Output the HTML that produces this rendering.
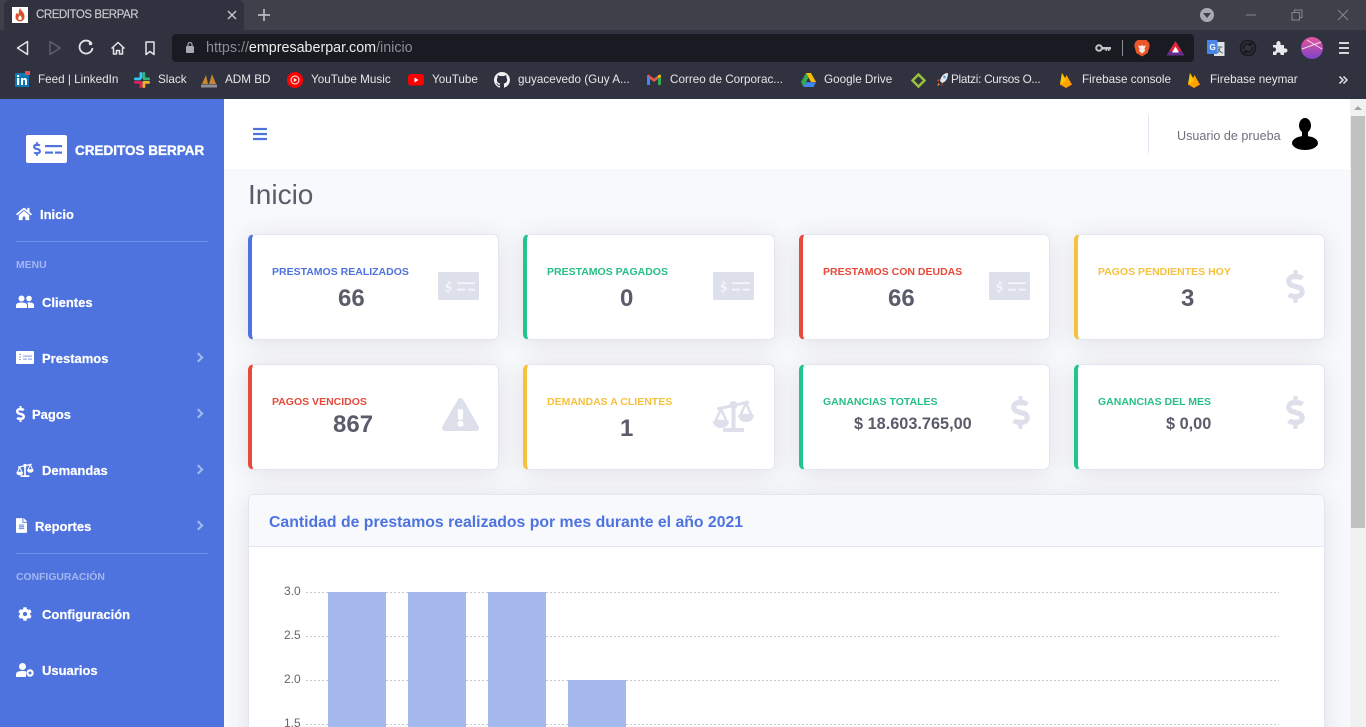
<!DOCTYPE html>
<html lang="es"><head><meta charset="utf-8"><title>CREDITOS BERPAR</title>
<style>
*{box-sizing:border-box}
html,body{margin:0;padding:0;width:1366px;height:727px;overflow:hidden;background:#f8f9fc;font-family:"Liberation Sans",sans-serif}
#root{position:relative;width:1366px;height:727px;overflow:hidden;background:#f8f9fc}
.a,.t,svg.i{position:absolute}
.t{white-space:nowrap;line-height:20px;height:20px}
.bm{color:#e6e6e8;font-size:11.7px}
.nav{color:#fff;font-weight:700;font-size:13px;-webkit-text-stroke:.2px #fff}
.head{color:#a4b6ef;font-weight:700;font-size:10.4px}
.chev{position:absolute;width:7px;height:7px;border-top:2.5px solid #a6b9ef;border-right:2.5px solid #a6b9ef;transform:rotate(45deg);left:195px}
.card{position:absolute;width:251px;height:106px;background:#fff;border-radius:6px;border:1px solid #e3e6f0;border-left:4px solid var(--c);box-shadow:0 3px 24px rgba(58,59,69,.13)}
.ct{font-weight:700;font-size:10.5px}
.cv{color:#5a5c69;font-weight:700;font-size:24px}
.cm{color:#5a5c69;font-weight:700;font-size:16.3px}
.yl{font-size:12px;color:#666;left:284px}
</style></head><body>
<div id="root">
<svg width="0" height="0" style="position:absolute">
<defs>
<symbol id="dol" viewBox="0 0 288 512"><path fill="currentColor" d="M209.2 233.4l-108-31.6C88.7 198.2 80 186.5 80 173.5c0-16.3 13.2-29.5 29.5-29.5h66.3c12.2 0 24.2 3.7 34.2 10.5 6.1 4.1 14.3 3.1 19.5-2l34.8-34c7.1-6.9 6.1-18.4-1.8-24.5C238 74.8 207.4 64.1 176 64V16c0-8.8-7.2-16-16-16h-32c-8.8 0-16 7.2-16 16v48h-2.5C45.8 64-5.4 118.7.5 183.6c4.2 46.1 39.4 83.6 83.8 96.6l102.5 30c12.5 3.7 21.2 15.3 21.2 28.3 0 16.3-13.2 29.5-29.5 29.5h-66.3C100 368 88 364.3 78 357.5c-6.1-4.1-14.3-3.1-19.5 2l-34.8 34c-7.1 6.9-6.1 18.4 1.8 24.5 24.5 19.2 55.1 29.9 86.5 30v48c0 8.8 7.2 16 16 16h32c8.8 0 16-7.2 16-16v-48.2c46.6-.9 90.3-28.6 105.7-72.7 21.5-61.6-14.6-124.8-72.5-141.7z"/></symbol>
<symbol id="chk" viewBox="0 0 41 28"><rect width="41" height="28" rx="1.5" fill="currentColor"/><g fill="#f3f4f8"><path d="M10.200 21.500v-1.500c-1.100-.1-2-.5-2.700-1.100l1-1.300c.6.5 1.300.9 2 .9.800 0 1.200-.3 1.200-.9 0-.5-.4-.9-1.600-1.300-1.500-.5-2.400-1.200-2.400-2.500 0-1.200.9-2.100 2.400-2.300V9h1.300v1.400c.9.1 1.500.5 2.100 1l-1 1.200c-.5-.4-1-.7-1.600-.7-.7 0-1.100.3-1.100.8s.4.800 1.600 1.200c1.600.6 2.400 1.300 2.400 2.600 0 1.200-.9 2.200-2.500 2.400v1.500z"/><rect x="19" y="10.200" width="18" height="1.900"/><rect x="19" y="16.700" width="8" height="1.900"/><rect x="30" y="16.700" width="7" height="1.900"/></g></symbol>
<symbol id="scl" viewBox="0 0 41 33"><g fill="currentColor"><path d="M8 10L2.500 22h11zM33 4l-5.500 12h11z" fill="none" stroke="currentColor" stroke-width="2.500"/><path d="M0 22h16c0 4-3.500 7-8 7S0 26 0 22zM25 16h16c0 4-3.500 7-8 7s-8-3-8-7z"/><path d="M4 10L36 3" stroke="currentColor" stroke-width="3"/><rect x="18.500" y="4" width="4" height="27"/><circle cx="20.500" cy="6" r="4"/><rect x="10" y="29" width="21" height="4" rx="1"/></g></symbol>
<symbol id="tri" viewBox="0 0 576 512"><path fill="currentColor" d="M569.517 440.013C587.975 472.007 564.806 512 527.94 512H48.054c-36.937 0-59.999-40.055-41.577-71.987L246.423 24.028c18.467-32.009 64.72-31.951 83.154 0l239.94 415.985zM288 354c-25.405 0-46 20.595-46 46s20.595 46 46 46 46-20.595 46-46-20.595-46-46-46zm-43.673-165.346l7.418 136c.347 6.364 5.609 11.346 11.982 11.346h48.546c6.373 0 11.635-4.982 11.982-11.346l7.418-136c.375-6.874-5.098-12.654-11.982-12.654h-63.383c-6.884 0-12.356 5.78-11.981 12.654z"/></symbol>
</defs></svg>

<!-- browser chrome -->
<div class="a" style="left:0;top:0;width:1366px;height:30px;background:#40404a"></div>
<div class="a" style="left:4px;top:0;width:240px;height:31px;background:#30333f;border-radius:6px 6px 0 0"></div>
<div class="a" style="left:0;top:30px;width:1366px;height:69px;background:#30333f"></div>
<svg class="i" style="left:12px;top:7px" width="16" height="16" viewBox="0 0 16 16"><rect width="16" height="16" fill="#fff"/><path fill="#d9502a" d="M8 1c1 3 4.500 4 4.500 8.500A4.500 4.500 0 0 1 8 14.500 4.500 4.500 0 0 1 3.500 9.500c0-2 1-3 1.700-4 .2 1.200.7 1.800 1.300 2.200C6.600 5.500 7 3 8 1z"/><path fill="#fff" d="M8 8c.7 1.200 1.800 1.800 1.800 3.300A1.800 1.800 0 0 1 8 13a1.800 1.800 0 0 1-1.800-1.700C6.200 10 7.500 9.500 8 8z"/></svg>
<div class="t" style="left:36px;top:5px;color:#c9cbd0;font-size:11.500px;letter-spacing:-.45px;-webkit-text-stroke:.15px #c9cbd0">CREDITOS BERPAR</div>
<svg class="i" style="left:226px;top:9px" width="12" height="12" viewBox="0 0 12 12"><path d="M2 2l8 8M10 2l-8 8" stroke="#c3c4c9" stroke-width="1.500"/></svg>
<svg class="i" style="left:257px;top:8px" width="14" height="14" viewBox="0 0 14 14"><path d="M7 1v12M1 7h12" stroke="#b8b9be" stroke-width="1.700"/></svg>
<svg class="i" style="left:1199px;top:7px" width="16" height="16" viewBox="0 0 16 16"><circle cx="8" cy="8" r="7" fill="#a9aab0"/><path d="M4 6h8l-4 5z" fill="#40404a"/></svg>
<svg class="i" style="left:1240px;top:5px" width="116" height="20" viewBox="0 0 116 20"><path d="M6 10h10" stroke="#85868c"/><path d="M52 7.500h7.500V15H52zM54.500 7.500V5H62v7.500h-2.500" fill="none" stroke="#85868c"/><path d="M98 5l10 10M108 5l-10 10" stroke="#85868c"/></svg>

<svg class="i" style="left:14px;top:38px" width="150" height="20" viewBox="0 0 150 20" fill="none" stroke="#e4e4e6" stroke-width="1.500"><path d="M13.500 3.500v13L3.500 10z" stroke-linejoin="round"/><path d="M36 3.500v13L46 10z" stroke="#5d606b" stroke-linejoin="round"/><path d="M77.500 5.500A6.500 6.500 0 1 0 78.500 10" stroke-width="1.800"/><circle cx="76.500" cy="5.500" r="1.800" fill="#e4e4e6" stroke="none"/><path d="M97.500 10.500l6.500-6 6.500 6M99.500 9.500V16h3v-3.500h3V16h3V9.500" stroke-linejoin="round"/><path d="M132 4h8v12.500l-4-3-4 3z" stroke-linejoin="round"/></svg>
<div class="a" style="left:172px;top:34px;width:1022px;height:28px;background:#191b22;border-radius:4px"></div>
<svg class="i" style="left:185px;top:41px" width="10" height="13" viewBox="0 0 10 13"><rect x="1" y="5" width="8" height="7" rx="1" fill="#a8a9ae"/><path d="M3 5V3.500a2 2 0 0 1 4 0V5" fill="none" stroke="#a8a9ae" stroke-width="1.200"/></svg>
<div class="t" style="left:206px;top:38px;font-size:14.300px;color:#8a8c93">https://<span style="color:#eceded">empresaberpar.com</span>/inicio</div>
<svg class="i" style="left:1095px;top:43px" width="16" height="10" viewBox="0 0 16 10"><circle cx="4" cy="5" r="2.800" fill="none" stroke="#c4c5c9" stroke-width="2"/><path d="M7 4h9v2.500h-1.500V8H13V6.500h-1V8h-1.500V6.500H7z" fill="#c4c5c9"/></svg>
<div class="a" style="left:1122px;top:40px;width:1px;height:16px;background:#8f9096"></div>
<svg class="i" style="left:1134px;top:39px" width="16" height="18" viewBox="0 0 16 18"><path d="M3.500 1h9L15 3.500l.7 3.500-2 7L8 17.500 2.300 14l-2-7L1 3.500z" fill="#e8562a"/><path d="M4 6.500l2.500.5L8 6l1.500 1L12 6.500l-1.500 3 .5 2.500L8 14.500 5 12l.5-2.500z" fill="#fbe9e2"/></svg>
<svg class="i" style="left:1166px;top:40px" width="19" height="16" viewBox="0 0 19 16"><path d="M9.500 1L18.500 15.500H.5z" fill="#e0263c"/><path d="M.5 15.500H18.500L15.500 11H3.500z" fill="#662d91"/><path d="M9.500 6.500l3.500 6h-7z" fill="#fff"/></svg>
<svg class="i" style="left:1207px;top:39px" width="18" height="18" viewBox="0 0 18 18"><rect x="7" y="3" width="10.500" height="14" fill="#dfe3e8"/><path d="M10.500 8h5M13 8c-.3 3-1.500 5-3 6M11 9.500c.7 2 2.500 3.500 4.500 4.500" stroke="#4b6a70" fill="none"/><rect y="1" width="10.500" height="14" rx="1" fill="#4a86e8"/><text x="2.500" y="11" font-size="8" font-weight="700" fill="#fff" font-family="Liberation Sans, sans-serif">G</text></svg>
<svg class="i" style="left:1239px;top:39px" width="18" height="18" viewBox="0 0 18 18" fill="none" stroke="#171a20" stroke-width="1.800"><circle cx="9" cy="9" r="7.500"/><path d="M4.500 10A4.500 4.500 0 0 1 12 6M13.500 8A4.500 4.500 0 0 1 6 12M12 3.500V6H9.500M6 14.500V12h2.500"/></svg>
<svg class="i" style="left:1272px;top:40px" width="16" height="16" viewBox="0 0 16 16"><path d="M1 5h3.500C4 3 5 1 6.500 1S9 3 8.500 5H12v3.500c2-.5 3.500.5 3.500 2S14 13 12 12.500V15H8.500c.5-1.500-.5-2.500-2-2.500S4 13.500 4.500 15H1v-3.500C3 12 4 11 4 9.500S3 7 1 7.500z" fill="#e9e9eb"/></svg>
<svg class="i" style="left:1301px;top:37px" width="22" height="22" viewBox="0 0 22 22"><defs><linearGradient id="av" x1="0" y1="0" x2="0" y2="1"><stop offset="0" stop-color="#e9559b"/><stop offset="1" stop-color="#7a44c9"/></linearGradient></defs><circle cx="11" cy="11" r="11" fill="url(#av)"/><path d="M1 12L20 5M6 3l15 9" stroke="#f4dbe8" stroke-width="1"/></svg>
<svg class="i" style="left:1338px;top:41px" width="12" height="14" viewBox="0 0 12 14"><path d="M1 2h10M1 7h10M1 12h10" stroke="#d6d7da" stroke-width="2"/></svg>

<!-- bookmarks -->
<svg class="i" style="left:15px;top:71px" width="15" height="16" viewBox="0 0 15 16"><rect y="2" width="14" height="14" fill="#0a78b0"/><rect x="10" y="0" width="5" height="4" fill="#e0525c"/><rect x="2" y="7" width="2.200" height="7" fill="#fff"/><rect x="2" y="4" width="2.200" height="2" fill="#fff"/><path d="M6 7h2v1c1-1.500 4-1.500 4 1.500V14h-2v-4c0-1.500-2-1.500-2 0v4H6z" fill="#fff"/></svg>
<div class="t bm" style="left:38px;top:70px">Feed | LinkedIn</div>
<svg class="i" style="left:134px;top:72px" width="16" height="16" viewBox="0 0 16 16"><rect x="5.500" y="0" width="2.800" height="7" rx="1.400" fill="#36c5f0"/><rect x="0" y="5.500" width="7" height="2.800" rx="1.400" fill="#36c5f0"/><rect x="8.500" y="0" width="2.800" height="7" rx="1.400" fill="#2eb67d"/><rect x="9" y="5.500" width="7" height="2.800" rx="1.400" fill="#2eb67d"/><rect x="8.500" y="9" width="2.800" height="7" rx="1.400" fill="#ecb22e"/><rect x="9" y="9" width="7" height="2.800" rx="1.400" fill="#ecb22e"/><rect x="5.500" y="9" width="2.800" height="7" rx="1.400" fill="#e01e5a"/><rect x="0" y="9" width="7" height="2.800" rx="1.400" fill="#e01e5a"/></svg>
<div class="t bm" style="left:158px;top:70px">Slack</div>
<svg class="i" style="left:201px;top:72px" width="16" height="16" viewBox="0 0 16 16"><path d="M1 12L5 3l2 9zM8 12l3-10 4 10z" fill="#c9862f"/><rect x="0" y="12.500" width="16" height="3" fill="#8e8f96"/></svg>
<div class="t bm" style="left:225px;top:70px">ADM BD</div>
<svg class="i" style="left:287px;top:72px" width="16" height="16" viewBox="0 0 16 16"><circle cx="8" cy="8" r="8" fill="#f00"/><circle cx="8" cy="8" r="4" fill="none" stroke="#fff"/><path d="M6.800 6v4L10 8z" fill="#fff"/></svg>
<div class="t bm" style="left:311px;top:70px">YouTube Music</div>
<svg class="i" style="left:408px;top:74px" width="16" height="12" viewBox="0 0 16 12"><rect width="16" height="11.500" rx="3" fill="#f00"/><path d="M6.500 3.500v5L10.500 6z" fill="#fff"/></svg>
<div class="t bm" style="left:432px;top:70px">YouTube</div>
<svg class="i" style="left:494px;top:72px" width="16" height="16" viewBox="0 0 16 16"><path fill="#f2f2f3" d="M8 0C3.580 0 0 3.580 0 8c0 3.540 2.290 6.530 5.470 7.590.4.070.55-.17.55-.38 0-.19-.01-.82-.01-1.490-2.010.37-2.530-.49-2.690-.94-.09-.23-.48-.94-.82-1.130-.28-.15-.68-.52-.01-.53.630-.01 1.080.580 1.230.820.720 1.210 1.870.870 2.330.660.070-.520.280-.870.510-1.070-1.780-.2-3.640-.890-3.640-3.950 0-.870.310-1.590.820-2.150-.08-.2-.360-1.020.080-2.120 0 0 .670-.210 2.200.820.640-.180 1.320-.270 2-.270s1.360.090 2 .270c1.530-1.040 2.200-.820 2.200-.820.440 1.100.160 1.920.080 2.120.510.560.820 1.270.820 2.150 0 3.070-1.870 3.750-3.650 3.950.290.250.540.730.540 1.480 0 1.070-.010 1.930-.010 2.200 0 .210.150.460.550.380A8.010 8.010 0 0 0 16 8c0-4.420-3.580-8-8-8z"/></svg>
<div class="t bm" style="left:518px;top:70px">guyacevedo (Guy A...</div>
<svg class="i" style="left:647px;top:74px" width="14" height="12" viewBox="0 0 14 12"><path d="M0 1.500V11h3V5L7 8l4-3v6h3V1.500L12.500.5 7 4.500 1.500.5z" fill="#e2574c"/><path d="M0 1.500V11h3V4z" fill="#4285f4"/><path d="M14 1.500V11h-3V4z" fill="#34a853"/><path d="M11 4V1.800L12.500.5 14 1.500V3z" fill="#fbbc04"/></svg>
<div class="t bm" style="left:670px;top:70px">Correo de Corporac...</div>
<svg class="i" style="left:801px;top:73px" width="15" height="14" viewBox="0 0 15 14"><path d="M5 0h5l5 9h-5z" fill="#fbbc04"/><path d="M5 0l2.500 4.500L2.500 14 0 9z" fill="#34a853"/><path d="M5 9.200h10L12.500 14h-10z" fill="#4285f4"/></svg>
<div class="t bm" style="left:824px;top:70px">Google Drive</div>
<svg class="i" style="left:911px;top:73px" width="15" height="15" viewBox="0 0 15 15"><path d="M7.500 1.500l6 6-6 6-6-6z" fill="none" stroke="#97c13c" stroke-width="2.500"/></svg>
<svg class="i" style="left:936px;top:72px" width="13" height="15" viewBox="0 0 13 15"><path d="M12 1C8 1 5 4 4 9l2 2c4-1 6-5 6-10z" fill="#e4e7ec"/><circle cx="8.500" cy="5" r="1.300" fill="#4aa3df"/><path d="M4 7L1 8l1.500 2zM6 11l-1 3 2-1.500z" fill="#d8412f"/><path d="M2.500 11L1 14l3-1.500z" fill="#f39c1f"/></svg>
<div class="t bm" style="left:951px;top:70px;letter-spacing:-.25px">Platzi: Cursos O...</div>
<svg class="i" style="left:1060px;top:72px" width="12" height="16" viewBox="0 0 12 16"><path d="M0 12.500L2 1l3 5 1.500-3L12 12.500 6 16z" fill="#ffa000"/><path d="M0 12.500L2 1l4.500 8z" fill="#ffc400"/></svg>
<div class="t bm" style="left:1082px;top:70px">Firebase console</div>
<svg class="i" style="left:1188px;top:72px" width="12" height="16" viewBox="0 0 12 16"><path d="M0 12.500L2 1l3 5 1.500-3L12 12.500 6 16z" fill="#ffa000"/><path d="M0 12.500L2 1l4.500 8z" fill="#ffc400"/></svg>
<div class="t bm" style="left:1210px;top:70px">Firebase neymar</div>
<svg class="i" style="left:1338px;top:75px" width="10" height="10" viewBox="0 0 10 10"><path d="M1.500 1.500L5 5 1.500 8.500M5.500 1.500L9 5 5.500 8.500" fill="none" stroke="#e4e4e6" stroke-width="1.500"/></svg>

<!-- sidebar -->
<div class="a" style="left:0;top:99px;width:224px;height:628px;background:#4e73df"></div>
<svg class="i" style="left:26px;top:135px;color:#4e73df" width="41" height="28"><rect width="41" height="28" rx="2" fill="#fff"/><use href="#dol" x="7" y="7" width="8" height="14"/><rect x="19" y="10" width="17" height="2.200" fill="#4e73df"/><rect x="19" y="16.500" width="8" height="2.200" fill="#4e73df"/><rect x="29" y="16.500" width="7" height="2.200" fill="#4e73df"/></svg>
<div class="t" style="left:75px;top:141px;color:#fff;font-weight:700;font-size:13.500px;-webkit-text-stroke:.35px #fff">CREDITOS BERPAR</div>

<svg class="i" style="left:16px;top:207px" width="16" height="14" viewBox="0 0 576 512"><path fill="#fff" d="M280.37 148.26L96 300.11V464a16 16 0 0 0 16 16l112.06-.29a16 16 0 0 0 15.92-16V368a16 16 0 0 1 16-16h64a16 16 0 0 1 16 16v95.64a16 16 0 0 0 16 16.05L464 480a16 16 0 0 0 16-16V300L295.67 148.26a12.19 12.19 0 0 0-15.3 0zM571.6 251.47L488 182.56V44.05a12 12 0 0 0-12-12h-56a12 12 0 0 0-12 12v72.61L318.47 43a48 48 0 0 0-61 0L4.34 251.47a12 12 0 0 0-1.6 16.9l25.5 31A12 12 0 0 0 45.15 301l235.22-193.74a12.19 12.19 0 0 1 15.3 0L530.9 301a12 12 0 0 0 16.9-1.6l25.5-31a12 12 0 0 0-1.7-16.93z"/></svg>
<div class="t nav" style="left:40px;top:205px">Inicio</div>
<div class="a" style="left:16px;top:241px;width:192px;height:1px;background:#7190e6"></div>
<div class="t head" style="left:16px;top:256px">MENU</div>

<svg class="i" style="left:16px;top:295px" width="18" height="14" viewBox="0 0 18 14"><circle cx="5.500" cy="3.500" r="3" fill="#fff"/><circle cx="13" cy="3.500" r="2.800" fill="#fff"/><path d="M0 13v-2.500C0 8.500 2 7.500 5.500 7.500S11 8.500 11 10.500V13zM12 13v-3c0-1-.5-1.800-1-2.300 2-.5 7-.5 7 2.300v3z" fill="#fff"/></svg>
<div class="t nav" style="left:42px;top:293px">Clientes</div>

<svg class="i" style="left:16px;top:351px" width="18" height="13" viewBox="0 0 18 13"><rect width="18" height="13" rx="1" fill="#fff"/><path d="M3 3.500h2M3 6h2M3 8.500h2" stroke="#8ea5ea" stroke-width=".9"/><rect x="7" y="4.500" width="9" height="1.200" fill="#8ea5ea"/><rect x="7" y="7.500" width="4" height="1.200" fill="#8ea5ea"/><rect x="12" y="7.500" width="4" height="1.200" fill="#8ea5ea"/></svg>
<div class="t nav" style="left:42px;top:349px">Prestamos</div>
<div class="chev" style="top:354px"></div>

<svg class="i" style="left:16px;top:406px;color:#fff" width="9" height="16"><use href="#dol" width="9" height="16"/></svg>
<div class="t nav" style="left:32px;top:405px">Pagos</div>
<div class="chev" style="top:410px"></div>

<svg class="i" style="left:16px;top:463px;color:#fff" width="18" height="14"><use href="#scl" width="18" height="14"/></svg>
<div class="t nav" style="left:42px;top:461px">Demandas</div>
<div class="chev" style="top:466px"></div>

<svg class="i" style="left:16px;top:518px" width="11" height="15" viewBox="0 0 384 512"><path fill="#fff" d="M224 136V0H24C10.700 0 0 10.700 0 24v464c0 13.300 10.700 24 24 24h336c13.300 0 24-10.700 24-24V160H248c-13.200 0-24-10.800-24-24zm64 236c0 6.600-5.400 12-12 12H108c-6.600 0-12-5.400-12-12v-8c0-6.600 5.400-12 12-12h168c6.600 0 12 5.400 12 12v8zm0-64c0 6.600-5.400 12-12 12H108c-6.600 0-12-5.400-12-12v-8c0-6.600 5.400-12 12-12h168c6.600 0 12 5.400 12 12v8zm0-72v8c0 6.600-5.400 12-12 12H108c-6.600 0-12-5.400-12-12v-8c0-6.600 5.400-12 12-12h168c6.600 0 12 5.400 12 12zm96-114.100v6.100H256V0h6.100c6.400 0 12.500 2.500 17 7l97.900 98c4.500 4.500 7 10.600 7 16.900z"/></svg>
<div class="t nav" style="left:35px;top:517px">Reportes</div>
<div class="chev" style="top:522px"></div>

<div class="a" style="left:16px;top:553px;width:192px;height:1px;background:#7190e6"></div>
<div class="t head" style="left:16px;top:568px">CONFIGURACIÓN</div>

<svg class="i" style="left:18px;top:607px" width="14" height="14" viewBox="0 0 512 512"><path fill="#fff" d="M487.4 315.7l-42.6-24.6c4.3-23.2 4.3-47 0-70.2l42.6-24.6c4.9-2.8 7.1-8.6 5.5-14-11.1-35.6-30-67.8-54.7-94.6-3.8-4.1-10-5.1-14.8-2.3L380.8 110c-17.9-15.4-38.5-27.3-60.8-35.1V25.8c0-5.6-3.9-10.5-9.4-11.7-36.7-8.2-74.3-7.8-109.2 0-5.5 1.2-9.4 6.1-9.4 11.7V75c-22.2 7.9-42.8 19.8-60.8 35.1L88.7 85.5c-4.9-2.8-11-1.9-14.8 2.3-24.7 26.7-43.6 58.9-54.7 94.6-1.7 5.4.6 11.2 5.5 14L67.3 221c-4.3 23.2-4.3 47 0 70.2l-42.6 24.6c-4.9 2.8-7.1 8.6-5.5 14 11.1 35.6 30 67.8 54.7 94.6 3.8 4.1 10 5.1 14.8 2.3l42.6-24.6c17.9 15.4 38.5 27.3 60.8 35.1v49.2c0 5.6 3.9 10.5 9.4 11.7 36.7 8.2 74.3 7.8 109.2 0 5.5-1.2 9.4-6.1 9.4-11.7v-49.2c22.2-7.9 42.8-19.8 60.8-35.1l42.6 24.6c4.9 2.8 11 1.900 14.8-2.3 24.7-26.7 43.6-58.9 54.7-94.6 1.5-5.5-.7-11.3-5.6-14.1zM256 336c-44.1 0-80-35.9-80-80s35.900-80 80-80 80 35.900 80 80-35.900 80-80 80z"/></svg>
<div class="t nav" style="left:42px;top:605px">Configuración</div>

<svg class="i" style="left:16px;top:663px" width="18" height="14" viewBox="0 0 18 14"><circle cx="6.500" cy="3.500" r="3.500" fill="#fff"/><path d="M0 14v-2.500C0 9 2 8 6.500 8c1.500 0 2.500.2 3.500.5V14z" fill="#fff"/><circle cx="14" cy="10" r="2.600" fill="none" stroke="#fff" stroke-width="2.200"/></svg>
<div class="t nav" style="left:42px;top:661px">Usuarios</div>

<!-- topbar -->
<div class="a" style="left:224px;top:99px;width:1126px;height:70px;background:#fff"></div>
<svg class="i" style="left:253px;top:127px" width="14" height="14" viewBox="0 0 14 14"><path d="M0 2h14M0 7h14M0 12h14" stroke="#4e73df" stroke-width="2.200"/></svg>
<div class="a" style="left:1148px;top:115px;width:1px;height:38px;background:#e3e6f0"></div>
<div class="t" style="left:1177px;top:126px;color:#6e707e;font-size:12.600px">Usuario de prueba</div>
<svg class="i" style="left:1292px;top:118px" width="26" height="32" viewBox="0 0 26 32"><ellipse cx="13" cy="7.500" rx="6" ry="7.500" fill="#000"/><rect x="10" y="12" width="6" height="8" fill="#000"/><ellipse cx="13" cy="25" rx="13" ry="7" fill="#000"/></svg>

<!-- scrollbar -->
<div class="a" style="left:1350px;top:99px;width:16px;height:628px;background:#f1f1f1"></div>
<svg class="i" style="left:1350px;top:99px" width="16" height="16"><path d="M4 11l4-4 4 4z" fill="#a3a3a3"/></svg>
<div class="a" style="left:1351px;top:116px;width:14px;height:412px;background:#c1c1c1"></div>

<div class="t" style="left:248px;top:175px;color:#5a5c69;font-size:28px;line-height:40px;height:40px">Inicio</div>

<!-- cards row 1 -->
<div class="card" style="left:248px;top:234px;--c:#4e73df"></div>
<div class="t ct" style="left:272px;top:262px;color:#4e73df">PRESTAMOS REALIZADOS</div>
<div class="t cv" style="left:338px;top:289px">66</div>
<svg class="i" style="left:438px;top:272px;color:#dddfeb" width="41" height="28"><use href="#chk" width="41" height="28"/></svg>

<div class="card" style="left:523px;top:234px;width:252px;--c:#22c58a"></div>
<div class="t ct" style="left:547px;top:262px;color:#27bf85">PRESTAMOS PAGADOS</div>
<div class="t cv" style="left:620px;top:289px">0</div>
<svg class="i" style="left:713px;top:272px;color:#dddfeb" width="41" height="28"><use href="#chk" width="41" height="28"/></svg>

<div class="card" style="left:799px;top:234px;--c:#e74a3b"></div>
<div class="t ct" style="left:823px;top:262px;color:#e74a3b">PRESTAMOS CON DEUDAS</div>
<div class="t cv" style="left:888px;top:289px">66</div>
<svg class="i" style="left:989px;top:272px;color:#dddfeb" width="41" height="28"><use href="#chk" width="41" height="28"/></svg>

<div class="card" style="left:1074px;top:234px;--c:#f6c23e"></div>
<div class="t ct" style="left:1098px;top:262px;color:#f6c23e">PAGOS PENDIENTES HOY</div>
<div class="t cv" style="left:1181px;top:289px">3</div>
<svg class="i" style="left:1286px;top:270px;color:#dddfeb" width="19" height="33"><use href="#dol" width="19" height="33"/></svg>

<!-- cards row 2 -->
<div class="card" style="left:248px;top:364px;--c:#e74a3b"></div>
<div class="t ct" style="left:272px;top:392px;color:#e74a3b">PAGOS VENCIDOS</div>
<div class="t cv" style="left:333px;top:415px">867</div>
<svg class="i" style="left:442px;top:398px;color:#dddfeb" width="37" height="33"><use href="#tri" width="37" height="33"/></svg>

<div class="card" style="left:523px;top:364px;width:252px;--c:#f6c23e"></div>
<div class="t ct" style="left:547px;top:392px;color:#f6c23e">DEMANDAS A CLIENTES</div>
<div class="t cv" style="left:620px;top:419px">1</div>
<svg class="i" style="left:713px;top:399px;color:#dddfeb" width="41" height="33"><use href="#scl" width="41" height="33"/></svg>

<div class="card" style="left:799px;top:364px;--c:#22c58a"></div>
<div class="t ct" style="left:823px;top:392px;color:#27bf85">GANANCIAS TOTALES</div>
<div class="t cm" style="left:854px;top:414px">$ 18.603.765,00</div>
<svg class="i" style="left:1011px;top:396px;color:#dddfeb" width="19" height="33"><use href="#dol" width="19" height="33"/></svg>

<div class="card" style="left:1074px;top:364px;--c:#22c58a"></div>
<div class="t ct" style="left:1098px;top:392px;color:#27bf85">GANANCIAS DEL MES</div>
<div class="t cm" style="left:1166px;top:414px">$ 0,00</div>
<svg class="i" style="left:1286px;top:396px;color:#dddfeb" width="19" height="33"><use href="#dol" width="19" height="33"/></svg>

<!-- chart card -->
<div class="a" style="left:248px;top:494px;width:1077px;height:260px;background:#fff;border:1px solid #e3e6f0;border-radius:6px;box-shadow:0 3px 24px rgba(58,59,69,.13);overflow:hidden">
  <div style="height:52px;background:#f8f9fc;border-bottom:1px solid #e3e6f0"></div>
</div>
<div class="t" style="left:269px;top:513px;color:#4e73df;font-weight:700;font-size:15.800px">Cantidad de prestamos realizados por mes durante el año 2021</div>

<svg class="i" style="left:300px;top:585px" width="985" height="142" viewBox="0 0 985 142">
<g stroke="#c9c9c9" stroke-dasharray="2 2"><path d="M6 7.500H979M6 51.500H979M6 95.500H979M6 139.500H979"/></g>
<g fill="#a6b9ef"><rect x="28" y="7" width="58" height="135"/><rect x="108" y="7" width="58" height="135"/><rect x="188" y="7" width="58" height="135"/><rect x="268" y="95" width="58" height="47"/></g>
</svg>
<div class="t yl" style="top:581px">3.0</div>
<div class="t yl" style="top:625px">2.5</div>
<div class="t yl" style="top:669px">2.0</div>
<div class="t yl" style="top:713px">1.5</div>
</div>
</body></html>
